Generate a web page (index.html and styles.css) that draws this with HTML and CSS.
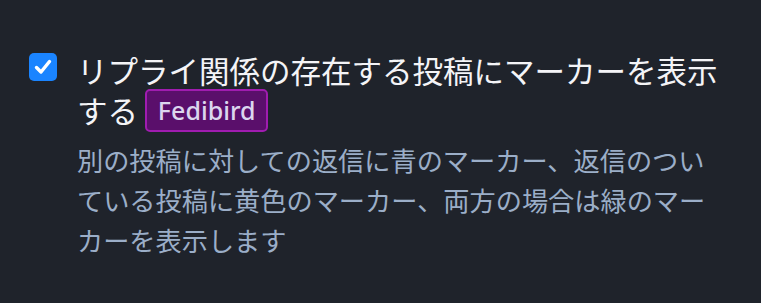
FILE: index.html
```html
<!DOCTYPE html>
<html lang="ja">
<head>
<meta charset="utf-8">
<link rel="stylesheet" href="styles.css">
</head>
<body>
<div class="setting">
  <span class="check" aria-hidden="true">
    <svg viewBox="0 0 28 28" width="28" height="28"><path d="M7.5 14.5 L12 19 L20.5 8.5" fill="none" stroke="#fff" stroke-width="3.4" stroke-linecap="round" stroke-linejoin="round"/></svg>
  </span>
  <div class="body">
    <div class="title">リプライ関係の存在する投稿にマーカーを表示する <span class="badge">Fedibird</span></div>
    <div class="hint">別の投稿に対しての返信に青のマーカー、返信のついている投稿に黄色のマーカー、両方の場合は緑のマーカーを表示します</div>
  </div>
</div>
</body>
</html>
```
FILE: styles.css
```css
html, body {
  margin: 0;
  background: #1f232b;
}
body {
  font-family: "Noto Sans CJK JP", "Noto Sans", sans-serif;
}
.setting {
  display: flex;
  gap: 20px;
  padding: 53px 20px 0 29px;
}
.check {
  flex: none;
  width: 28px;
  height: 28px;
  border-radius: 5px;
  background: #1a84ff;
  display: flex;
}
.body {
  width: 650px;
}
.title {
  color: #f4f4f7;
  font-size: 30.5px;
  line-height: 38px;
  margin-top: -2px;
}
.badge {
  display: inline-block;
  font-family: "Noto Sans", sans-serif;
  font-weight: 500;
  font-size: 25px;
  line-height: 39px;
  padding: 0 11px;
  color: #dcd6ee;
  background: #5a0f6b;
  border: 2px solid #a01cb0;
  border-radius: 5px;
  vertical-align: 3px;
}
.hint {
  color: #9baec8;
  font-size: 26.2px;
  line-height: 40px;
  margin-top: 8px;
}
```
